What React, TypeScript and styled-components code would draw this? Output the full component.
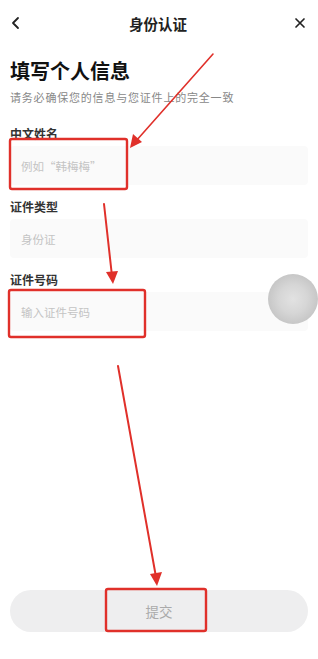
import styled, { createGlobalStyle } from "styled-components";

const GlobalStyle = createGlobalStyle`
  html, body {
    margin: 0;
    padding: 0;
    background: #ffffff;
    font-family: "Noto Sans CJK SC", "Noto Sans", sans-serif;
  }
  * { box-sizing: border-box; }
`;

function App() {
  return (
    <Page>
      <GlobalStyle />
      <Header>
        <IconButton aria-label="back">
          <svg width="12" height="14" viewBox="0 0 12 14">
            <path d="M8 2 L3 7 L8 12" fill="none" stroke="#222" strokeWidth="1.8" strokeLinecap="round" strokeLinejoin="round" />
          </svg>
        </IconButton>
        <HeaderTitle>身份认证</HeaderTitle>
        <IconButton aria-label="close">
          <svg width="12" height="12" viewBox="0 0 12 12">
            <path d="M2 2 L10 10 M10 2 L2 10" fill="none" stroke="#222" strokeWidth="1.7" strokeLinecap="round" />
          </svg>
        </IconButton>
      </Header>

      <Content>
        <Title>填写个人信息</Title>
        <Subtitle>请务必确保您的信息与您证件上的完全一致</Subtitle>

        <Field>
          <Label>中文姓名</Label>
          <InputBox>例如“韩梅梅”</InputBox>
        </Field>
        <Field>
          <Label>证件类型</Label>
          <InputBox>身份证</InputBox>
        </Field>
        <Field>
          <Label>证件号码</Label>
          <InputBox>输入证件号码</InputBox>
        </Field>
      </Content>

      <Footer>
        <SubmitButton>提交</SubmitButton>
      </Footer>

      <FloatBall />

      {/* red annotation marks drawn over the screen */}
      <Annotations width="318" height="659" viewBox="0 0 318 659">
        <g fill="none" stroke="#e0302a" strokeWidth="2.4">
          <rect x="10" y="139" width="117" height="50" rx="2" />
          <rect x="9" y="290" width="136" height="47" rx="2" />
          <rect x="106" y="589" width="100" height="42" rx="2" />
        </g>
        <g stroke="#e0302a" strokeLinecap="round">
          <line x1="213" y1="54" x2="136" y2="141" strokeWidth="1.6" />
          <line x1="104" y1="204" x2="112" y2="276" strokeWidth="2" />
          <line x1="118" y1="366" x2="156" y2="577" strokeWidth="2" />
        </g>
        <g fill="#e0302a">
          <polygon points="130,148 133,134 142,142" />
          <polygon points="113,284 106,272 118,271" />
          <polygon points="157,586 150,574 162,572" />
        </g>
      </Annotations>
    </Page>
  );
}

export default App;

const Page = styled.div`
  position: relative;
  width: 318px;
  height: 659px;
  display: flex;
  flex-direction: column;
  background: #ffffff;
  overflow: hidden;
`;

const Header = styled.div`
  display: flex;
  align-items: center;
  justify-content: space-between;
  height: 30px;
  margin-top: 8px;
  padding: 0 10px 0 8px;
`;

const IconButton = styled.div`
  width: 16px;
  height: 16px;
  display: flex;
  align-items: center;
  justify-content: center;
`;

const HeaderTitle = styled.div`
  font-size: 14.5px;
  font-weight: 700;
  color: #222;
`;

const Content = styled.div`
  flex: 1;
  padding: 19px 10px 0 10px;
`;

const Title = styled.div`
  font-size: 20px;
  font-weight: 700;
  color: #111;
  line-height: 27px;
`;

const Subtitle = styled.div`
  margin-top: 6px;
  font-size: 11px;
  letter-spacing: 0.8px;
  color: #888;
  line-height: 15px;
  margin-bottom: 21px;
`;

const Field = styled.div`
  margin-bottom: 14px;
`;

const Label = styled.div`
  font-size: 12px;
  font-weight: 700;
  color: #333;
  line-height: 16px;
  margin-bottom: 4px;
`;

const InputBox = styled.div`
  height: 39px;
  background: #fafafa;
  border-radius: 4px;
  display: flex;
  align-items: center;
  padding-left: 11px;
  font-size: 11.5px;
  color: #c4c4c4;
`;

const Footer = styled.div`
  padding: 0 10px 27px 10px;
`;

const SubmitButton = styled.div`
  height: 42px;
  border-radius: 21px;
  background: #eeeeef;
  display: flex;
  align-items: center;
  justify-content: center;
  font-size: 13.5px;
  color: #aaa;
`;

const FloatBall = styled.div`
  position: absolute;
  left: 268px;
  top: 274px;
  width: 50px;
  height: 50px;
  border-radius: 50%;
  background: radial-gradient(circle at 50% 50%, #e2e2e2 0, #d6d6d6 40%, #b8b8b8 100%);
`;

const Annotations = styled.svg`
  position: absolute;
  left: 0;
  top: 0;
  pointer-events: none;
`;
